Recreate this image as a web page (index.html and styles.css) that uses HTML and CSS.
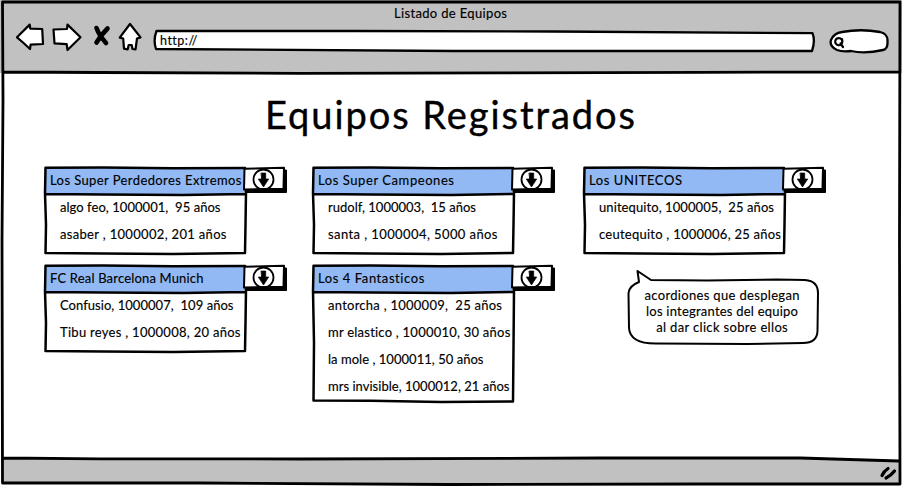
FILE: index.html
```
<!DOCTYPE html>
<html lang="es">
<head>
<meta charset="utf-8">
<title>Listado de Equipos</title>
<link rel="stylesheet" href="styles.css">
</head>
<body>
<svg class="defs" aria-hidden="true">
  <symbol id="card-short" viewBox="0 0 246 92">
    <path class="blue" d="M2 3H201V30H1Z"/>
    <path class="ink" d="M2.500 2.700L60 2.500L130 3.300L202 3M2.500 3L2 28L3 60L2.500 88L60 88.500L130 89L202 88L202.500 60L203 27M2 29L60 29.500L140 30L203 29"/>
    <path class="shade" d="M238 5H243.500V27.500H202V24H240Z"/>
    <path class="key" d="M201.500 3.800L241 2.800L240.500 23.800L201 24.500Z"/>
    <circle class="ring" cx="220.500" cy="14.500" r="10"/>
    <path class="arrow" d="M218.300 8H222.700V14H225.700L220.500 22L215.300 14H218.300Z"/>
  </symbol>
  <symbol id="card-tall" viewBox="0 0 246 142">
    <path class="blue" d="M2 3H201V30H1Z"/>
    <path class="ink" d="M2.500 2.700L60 2.500L130 3.300L202 3M2.500 3L2 28L3 80L2.500 137.500L60 137.800L130 139L202 138.500L202.500 85L203 27M2 29L60 29.500L140 30L203 29"/>
    <path class="shade" d="M238 5H243.500V27.500H202V24H240Z"/>
    <path class="key" d="M201.500 3.800L241 2.800L240.500 23.800L201 24.500Z"/>
    <circle class="ring" cx="220.500" cy="14.500" r="10"/>
    <path class="arrow" d="M218.300 8H222.700V14H225.700L220.500 22L215.300 14H218.300Z"/>
  </symbol>
</svg>
<div class="window">
  <header class="chrome">
    <div class="tab"><span data-w="113">Listado de Equipos</span></div>
    <div class="toolbar">
      <svg class="nav" width="142" height="36" viewBox="0 0 142 36">
        <g class="outline">
          <path d="M2 17.300L14.700 4.600L15.300 8.700L27.200 9L28 24L15.600 24.600L15 29L8 22.500Z"/>
          <path d="M38.500 9.500L52 9L52.500 4.600L65.500 17.300L52.500 30L51.700 24.200L39.500 23.300Z"/>
          <path d="M115 4L125.500 17.400L122 18.500L120.500 29.300L117.500 29L116.700 25L113.700 25L112.700 29.300L109 28.600L108.200 18.500L104.700 17.600Z"/>
        </g>
        <path class="cross" d="M81.500 8Q84 15 91 23M92.500 8.500Q86 15 81.500 22.500"/>
      </svg>
      <div class="address">
        <svg width="663" height="24" viewBox="0 0 663 24"><path class="field" d="M3.500 2L200 2L400 2.500L659.500 4.200Q662.500 12 659 22L300 22L3 20Q0 11 3.500 2Z"/></svg>
        <span data-w="37">http://</span>
      </div>
      <svg class="search" width="62" height="27" viewBox="0 0 62 27">
        <path class="field" d="M13 4Q32 .5 51 4Q59 6 58.500 13Q59 21 54 22Q36 26 22 23Q13 24 8 22Q0 18 2 12Q5 5 13 4Z"/>
        <path class="lens" d="M13 12A3.600 3.600 0 1 0 12 16.500Q14 14.500 13 11M11.500 15.500L14 19"/>
      </svg>
    </div>
  </header>
  <main class="page">
    <h1><span data-w="370">Equipos Registrados</span></h1>
    <div class="columns">
      <div class="column">
        <section class="card"><svg class="art"><use href="#card-short"/></svg>
          <h2><span data-w="191.500">Los Super Perdedores Extremos</span></h2>
          <ul><li><span data-w="160.500">algo feo, 1000001,  95 años</span></li><li><span data-w="166.500">asaber , 1000002, 201 años</span></li></ul>
        </section>
        <section class="card"><svg class="art"><use href="#card-short"/></svg>
          <h2><span data-w="153.500">FC Real Barcelona Munich</span></h2>
          <ul><li><span data-w="173.500">Confusio, 1000007,  109 años</span></li><li><span data-w="180.500">Tibu reyes , 1000008, 20 años</span></li></ul>
        </section>
      </div>
      <div class="column">
        <section class="card"><svg class="art"><use href="#card-short"/></svg>
          <h2><span data-w="136">Los Super Campeones</span></h2>
          <ul><li><span data-w="148">rudolf, 1000003,  15 años</span></li><li><span data-w="169.500">santa , 1000004, 5000 años</span></li></ul>
        </section>
        <section class="card tall"><svg class="art"><use href="#card-tall"/></svg>
          <h2><span data-w="106.500">Los 4 Fantasticos</span></h2>
          <ul><li><span data-w="174">antorcha , 1000009,  25 años</span></li><li><span data-w="182.500">mr elastico , 1000010, 30 años</span></li><li><span data-w="155.500">la mole , 1000011, 50 años</span></li><li><span data-w="181.500">mrs invisible, 1000012, 21 años</span></li></ul>
        </section>
      </div>
      <div class="column">
        <section class="card"><svg class="art"><use href="#card-short"/></svg>
          <h2><span data-w="93">Los UNITECOS</span></h2>
          <ul><li><span data-w="175">unitequito, 1000005,  25 años</span></li><li><span data-w="182">ceutequito , 1000006, 25 años</span></li></ul>
        </section>
        <aside class="note">
          <svg class="art" viewBox="0 0 194 76"><path class="bubble" d="M12 13L10.500 2L24 11L80 11.500L150 10.500L178 11Q191 12 191 24L190.500 62Q190 74 176 74L120 75L30 74.500Q3 75 2 59L1.500 24Q2 17 12 13Z"/></svg>
          <p><span data-w="155">acordiones que desplegan</span></p>
          <p><span data-w="152">los integrantes del equipo</span></p>
          <p><span data-w="131.500">al dar click sobre ellos</span></p>
        </aside>
      </div>
    </div>
  </main>
  <svg class="frame" viewBox="0 0 902 486">
    <path class="statusfill" d="M2 458H600L700 457.500L800 458L900 461V484H2Z"/>
    <path d="M2.500 2H900L899.500 240L900 484L700 484L450 484.500L200 483L2.500 483L2 240L3 100L2.500 2M3 72L100 72.500L300 73.300L500 72.800L700 72.300L899 72M3 458L100 458.800L300 459L600 458L800 458L899 461"/>
    <path class="gripline" d="M882 475.500Q884 471 888 468.500M886 478Q891 475.500 894.500 471"/>
  </svg>
</div>
<script src="fit.js"></script>
</body>
</html>
```
FILE: styles.css
```
* { box-sizing: border-box; margin: 0; padding: 0; }
body { width: 902px; height: 486px; overflow: hidden; background: #fff; color: #000; font: 13px/27px Lato, "Open Sans", sans-serif; -webkit-text-stroke: .15px #000; }
span { display: inline-block; white-space: pre; }
svg { display: block; fill: none; stroke: #000; stroke-linejoin: round; stroke-linecap: round; }
.defs { position: absolute; width: 0; height: 0; }
.window { position: relative; display: flex; flex-direction: column; width: 902px; height: 486px; }
.chrome { height: 73px; background: #c1c1c1; padding-right: 1px; }
.tab { height: 20px; padding-top: 3px; line-height: 20px; text-align: center; }
.toolbar { display: flex; align-items: flex-start; padding-left: 15px; }
.nav { margin-right: -4px; }
.outline { fill: #fff; stroke-width: 2.2; }
.cross { stroke-width: 4.6; }
.address { position: relative; width: 663px; height: 24px; margin: 9px 13px 0 0; padding-left: 7px; font-size: 12.500px; line-height: 24px; }
.address svg { position: absolute; top: 0; left: 0; }
.address span { position: relative; }
.field { fill: #fff; stroke-width: 2.3; }
.search { margin-top: 8px; }
.lens { stroke-width: 2.2; }
.page { flex: 1; padding: 18px 0 0 43px; }
h1 { height: 74px; padding-left: 222px; font-size: 38px; line-height: 46px; font-weight: 400; -webkit-text-stroke: .4px #000; }
.columns { display: grid; grid-template-columns: 268px 271px 246px; }
.card { position: relative; width: 246px; height: 98px; }
.card.tall { height: 142px; }
.art { position: absolute; top: 0; left: 0; width: 246px; height: 92px; }
.tall .art { height: 142px; }
h2 { position: relative; height: 29px; padding: 2px 0 0 7px; font-size: 13px; font-weight: 400; line-height: 27px; }
ul { position: relative; list-style: none; padding-left: 17px; }
li { height: 27px; }
.blue { fill: #92b9f3; stroke: none; }
.ink { stroke-width: 2.5; }
.shade { fill: #000; stroke: #000; stroke-width: 1; }
.key { fill: #fff; stroke-width: 2; }
.ring { stroke-width: 1.8; }
.arrow { fill: #000; stroke-width: .7; }
.note { position: relative; width: 194px; height: 76px; margin: 6px 0 0 45px; padding: 18px 4px 0 0; text-align: center; line-height: 16px; }
.note .art { width: 194px; height: 76px; }
.note p { position: relative; height: 16px; }
.bubble { fill: #fff; stroke-width: 2; }
.frame { position: absolute; top: 0; left: 0; width: 902px; height: 486px; stroke-width: 2.8; }
.statusfill { fill: #c1c1c1; stroke: none; }
.gripline { stroke-width: 3.2; }
```
FILE: fit.js
```
// Track each label so that it fills its sketched width.
document.querySelectorAll("[data-w]").forEach(function (el) {
  var gap = (parseFloat(el.dataset.w) - el.getBoundingClientRect().width) / (el.textContent.length - 1);
  el.style.letterSpacing = gap + "px";
  el.style.marginRight = -gap + "px";
});
```
